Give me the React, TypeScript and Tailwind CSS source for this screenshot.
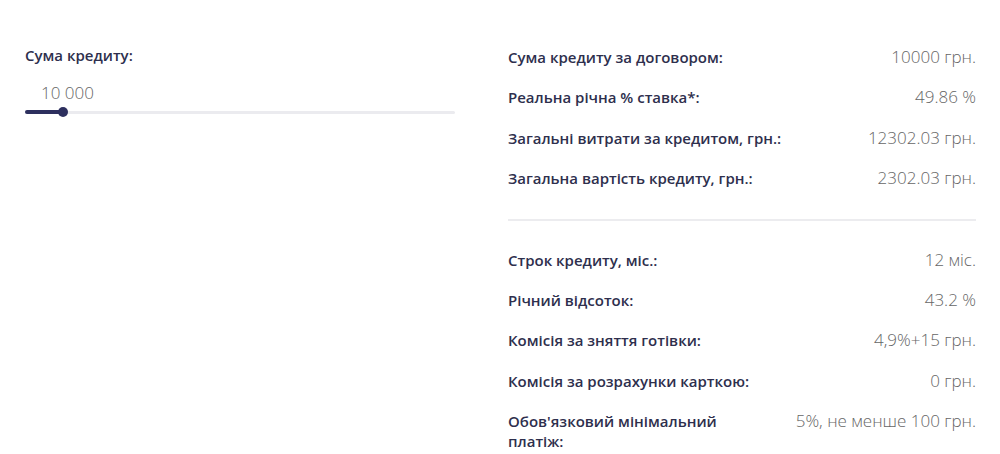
import React from 'react';

const topRows = [
  { label: 'Сума кредиту за договором:', value: '10000 грн.' },
  { label: 'Реальна річна % ставка*:', value: '49.86 %' },
  { label: 'Загальні витрати за кредитом, грн.:', value: '12302.03 грн.' },
  { label: 'Загальна вартість кредиту, грн.:', value: '2302.03 грн.' },
];

const bottomRows = [
  { label: 'Строк кредиту, міс.:', value: '12 міс.' },
  { label: 'Річний відсоток:', value: '43.2 %' },
  { label: 'Комісія за зняття готівки:', value: '4,9%+15 грн.' },
  { label: 'Комісія за розрахунки карткою:', value: '0 грн.' },
  { label: "Обов'язковий мінімальний платіж:", value: '5%, не менше 100 грн.', narrow: true },
];

function Row({ label, value, narrow }: { label: string; value: string; narrow?: boolean }) {
  return (
    <div className="flex justify-between items-start gap-6">
      <span className={`text-[15px] leading-[20px] font-semibold text-[#2e2f4d] ${narrow ? 'max-w-[240px]' : ''}`}>
        {label}
      </span>
      <span className="text-[17px] leading-[20px] font-light text-[#666666] whitespace-nowrap">{value}</span>
    </div>
  );
}

export default function App() {
  return (
    <div className="w-[1000px] h-[454px] bg-white overflow-hidden font-['Open_Sans',sans-serif] flex pl-[25px] pt-[45px] gap-[53px]">
      {/* левая колонка: слайдер суммы */}
      <div className="w-[430px] flex flex-col">
        <span className="text-[15px] leading-[20px] font-semibold text-[#2e2f4d]">Сума кредиту:</span>
        <span className="mt-[18px] pl-[16px] text-[17px] leading-[20px] font-light text-[#666666]">10 000</span>
        <div className="relative mt-[4px] h-[10px] flex items-center">
          <div className="w-full h-[3px] bg-[#ebebef] rounded-full" />
          <div className="absolute left-0 h-[4px] w-[38px] bg-[#2d2f5e] rounded-full" />
          <div className="absolute left-[33px] w-[10px] h-[10px] bg-[#2d2f5e] rounded-full" />
        </div>
      </div>

      {/* правая колонка: параметры */}
      <div className="w-[468px] flex flex-col pt-[2px]">
        <div className="flex flex-col gap-[20.3px]">
          {topRows.map((r) => (
            <Row key={r.label} {...r} />
          ))}
        </div>
        <div className="h-[2px] bg-[#ececef] mt-[31px] mb-[29px]" />
        <div className="flex flex-col gap-[20.3px]">
          {bottomRows.map((r) => (
            <Row key={r.label} {...r} />
          ))}
        </div>
      </div>
    </div>
  );
}
